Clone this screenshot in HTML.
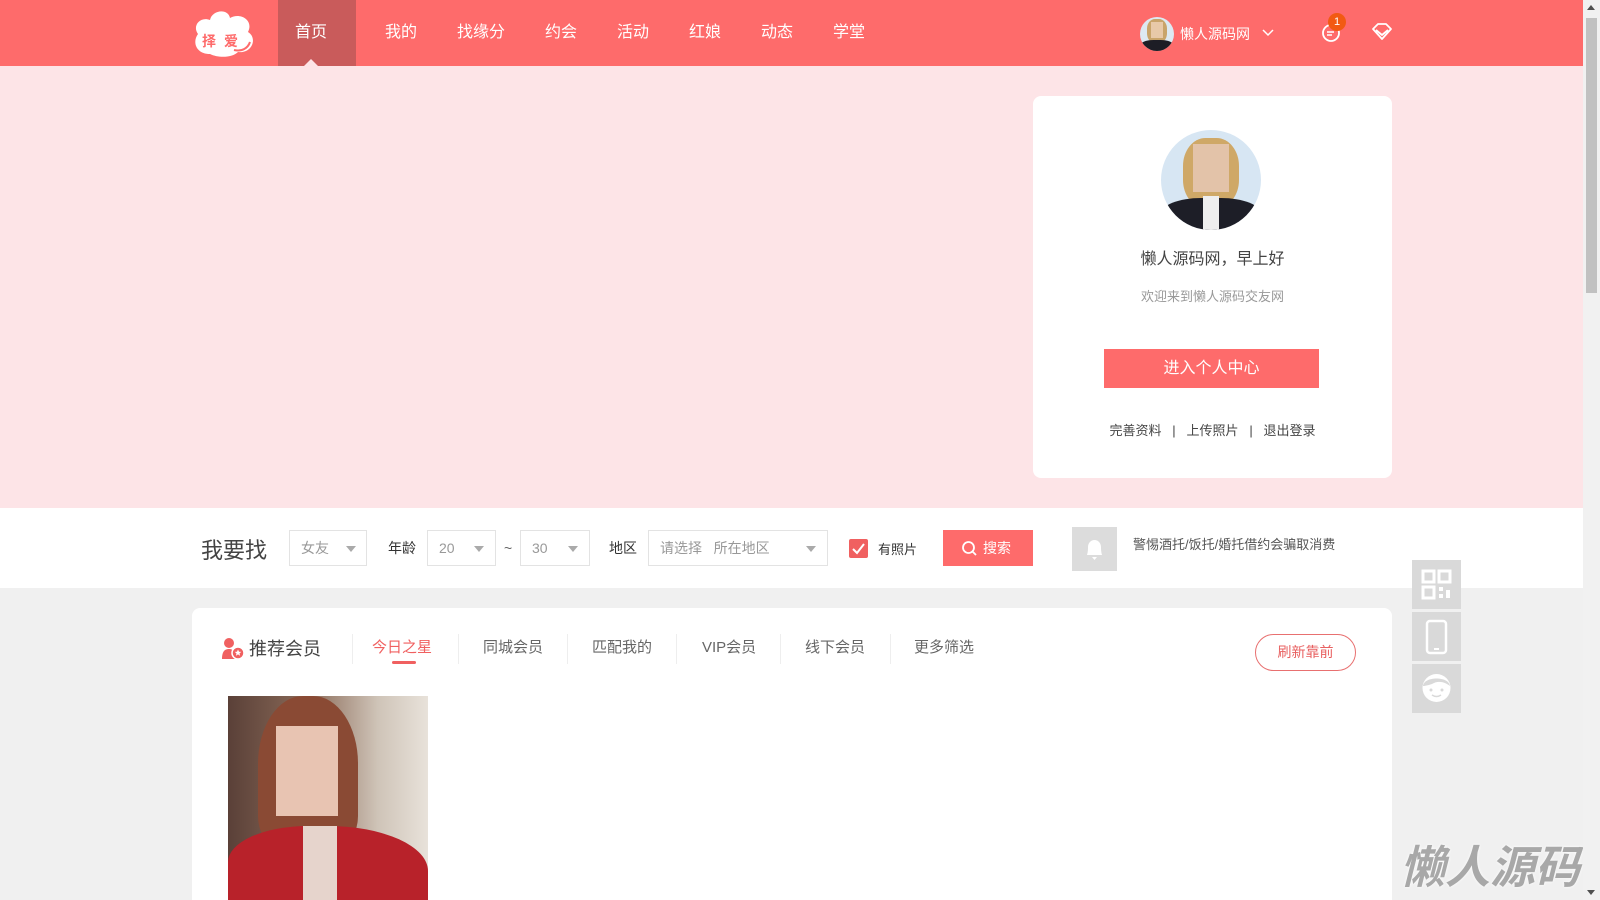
<!DOCTYPE html>
<html style="width:1600px;height:900px;overflow:hidden"><head><meta charset="utf-8">
<style>
*{margin:0;padding:0;box-sizing:border-box}
body{width:1600px;height:900px;overflow:hidden;background:#f0f0f0;font-family:"Liberation Sans","Noto Sans CJK SC",sans-serif;position:relative;color:#333}
.abs{position:absolute}
.nav{left:0;top:0;width:1583px;height:66px;background:#fe6b6b}
.nav .it{position:absolute;top:0;height:66px;line-height:66px;color:#fff;font-size:16px;transform:translateX(-50%)}
.banner{left:0;top:66px;width:1583px;height:442px;background:#fde4e7}
.card{left:1033px;top:96px;width:359px;height:382px;background:#fff;border-radius:8px}
.sbar{left:0;top:508px;width:1583px;height:80px;background:#fff}
.box{position:absolute;top:530px;height:36px;border:1px solid #e3e3e3;color:#999;font-size:14px;line-height:34px;padding-left:11px}
.tri{position:absolute;top:15px;width:0;height:0;border-left:5px solid transparent;border-right:5px solid transparent;border-top:6px solid #aaa}
.lbl{position:absolute;top:530px;line-height:36px;font-size:14px;color:#333}
.panel{left:192px;top:608px;width:1200px;height:292px;background:#fff;border-radius:8px 8px 0 0}
.tab{position:absolute;top:636px;font-size:15px;color:#666;line-height:24px}
.sep{position:absolute;top:634px;width:1px;height:30px;background:#eee}
.side{position:absolute;left:1412px;width:49px;height:49px;background:#d9d9d9}
</style></head><body>
<div class="abs nav">
  <svg class="abs" style="left:190px;top:8px" width="70" height="50" viewBox="0 0 70 50">
    <path d="M20 46 C6 46 2 34 8 26 C2 18 10 8 20 12 C22 2 38 0 40 10 C50 4 64 12 58 24 C68 30 62 46 48 44 C42 50 28 50 20 46Z" fill="#fff"/>
    <path d="M44 42 C52 44 58 40 60 34" stroke="#fe6b6b" stroke-width="2" fill="none"/>
    <text x="12" y="38" font-size="14" fill="#fe6b6b" font-weight="bold" font-family="Noto Sans CJK SC">择</text>
    <text x="34" y="38" font-size="14" fill="#fe6b6b" font-weight="bold" font-family="Noto Sans CJK SC">爱</text>
  </svg>
  <div class="abs" style="left:278px;top:0;width:78px;height:66px;background:#c95b5b"></div>
  <div class="abs" style="left:311px;top:59px;width:0;height:0;border-left:7px solid transparent;border-right:7px solid transparent;border-bottom:7px solid #fde4e7;transform:translateX(-50%)"></div>
  <div class="it" style="left:311px">首页</div>
  <div class="it" style="left:401px">我的</div>
  <div class="it" style="left:481px">找缘分</div>
  <div class="it" style="left:561px">约会</div>
  <div class="it" style="left:633px">活动</div>
  <div class="it" style="left:705px">红娘</div>
  <div class="it" style="left:777px">动态</div>
  <div class="it" style="left:849px">学堂</div>
  <div class="abs" style="left:1140px;top:17px;width:34px;height:34px;border-radius:50%;overflow:hidden;background:#dde9f2">
    <div class="abs" style="left:7px;top:2px;width:20px;height:24px;border-radius:40%;background:#c9a46a"></div>
    <div class="abs" style="left:11px;top:5px;width:12px;height:16px;background:#e8c9a8"></div>
    <div class="abs" style="left:0;top:23px;width:34px;height:14px;background:#1d1d25;border-radius:40% 40% 0 0"></div>
  </div>
  <div class="abs" style="left:1180px;top:24px;color:#fff;font-size:14px">懒人源码网</div>
  <svg class="abs" style="left:1262px;top:29px" width="12" height="8"><path d="M1 1 L6 6 L11 1" stroke="#fff" stroke-width="1.5" fill="none"/></svg>
  <svg class="abs" style="left:1321px;top:22px" width="22" height="22"><circle cx="10" cy="11" r="8" stroke="#fff" stroke-width="1.8" fill="none"/><path d="M6 10h7M6 13h5" stroke="#fff" stroke-width="1.5"/></svg>
  <div class="abs" style="left:1328px;top:13px;width:18px;height:18px;border-radius:50%;background:#f25a12;color:#fff;font-size:11px;text-align:center;line-height:18px">1</div>
  <svg class="abs" style="left:1371px;top:22px" width="22" height="20"><path d="M2 7 L7 2 H15 L20 7 L11 17Z M5 8 L11 13 L17 8" stroke="#fff" stroke-width="1.8" fill="none" stroke-linejoin="round"/></svg>
</div>
<div class="abs banner"></div>
<div class="abs card">
  <div class="abs" style="left:128px;top:34px;width:100px;height:100px;border-radius:50%;overflow:hidden;background:#d7e6f3">
    <div class="abs" style="left:22px;top:8px;width:56px;height:70px;border-radius:40%;background:#cfa867"></div>
    <div class="abs" style="left:32px;top:14px;width:36px;height:48px;background:#e3c3a9"></div>
    <div class="abs" style="left:0;top:68px;width:100px;height:40px;background:#1d1e27;border-radius:40% 40% 0 0"></div>
    <div class="abs" style="left:42px;top:66px;width:16px;height:36px;background:#eee"></div>
  </div>
  <div class="abs" style="left:0;width:359px;top:149px;text-align:center;font-size:16px;color:#444">懒人源码网，早上好</div>
  <div class="abs" style="left:0;width:359px;top:190px;text-align:center;font-size:13px;color:#999">欢迎来到懒人源码交友网</div>
  <div class="abs" style="left:71px;top:253px;width:215px;height:39px;background:#fe6b6b;color:#fff;font-size:16px;text-align:center;line-height:39px">进入个人中心</div>
  <div class="abs" style="left:0;width:359px;top:324px;text-align:center;font-size:13px;color:#444">完善资料 &nbsp;&nbsp;|&nbsp;&nbsp; 上传照片 &nbsp;&nbsp;|&nbsp;&nbsp; 退出登录</div>
</div>
<div class="abs sbar"></div>
<div class="abs" style="left:201px;top:533px;font-size:22px;color:#444">我要找</div>
<div class="box" style="left:289px;width:78px">女友<span class="tri" style="left:56px"></span></div>
<div class="lbl" style="left:388px">年龄</div>
<div class="box" style="left:427px;width:69px">20<span class="tri" style="left:46px"></span></div>
<div class="lbl" style="left:504px;color:#666">~</div>
<div class="box" style="left:520px;width:70px">30<span class="tri" style="left:47px"></span></div>
<div class="lbl" style="left:609px">地区</div>
<div class="box" style="left:648px;width:180px">请选择 &nbsp;&nbsp;所在地区<span class="tri" style="left:157px"></span></div>
<div class="abs" style="left:849px;top:539px;width:19px;height:19px;background:#f06060;border-radius:2px"><svg width="19" height="19"><path d="M4 10 L8 14 L15 5" stroke="#fff" stroke-width="2" fill="none"/></svg></div>
<div class="lbl" style="left:878px;top:532px;font-size:13px">有照片</div>
<div class="abs" style="left:943px;top:530px;width:90px;height:36px;background:#fe6b6b;color:#fff;font-size:14px;line-height:36px;padding-left:40px">搜索
  <svg class="abs" style="left:18px;top:10px" width="18" height="18"><circle cx="7.5" cy="7.5" r="5.5" stroke="#fff" stroke-width="1.8" fill="none"/><path d="M11.5 11.5 L15 15" stroke="#fff" stroke-width="1.8"/></svg></div>
<div class="abs" style="left:1072px;top:527px;width:45px;height:44px;background:#dcdcdc">
  <svg width="45" height="44"><path d="M15 28 C16 25 16 22 16 20 C16 16 19 13 22.5 13 C26 13 29 16 29 20 C29 22 29 25 30 28Z" fill="#fff"/><path d="M20 30 h5 l-2.5 3z" fill="#fff"/></svg></div>
<div class="abs" style="left:1133px;top:534px;font-size:13px;color:#555">警惕酒托/饭托/婚托借约会骗取消费</div>
<div class="abs panel"></div>
<svg class="abs" style="left:221px;top:637px" width="24" height="24"><circle cx="8" cy="6" r="5" fill="#f06060"/><path d="M1 22 C1 14 4 12 8 12 C12 12 14 14 14 22Z" fill="#f06060"/><circle cx="17" cy="16" r="6" fill="#f06060" stroke="#fff" stroke-width="1.5"/><path d="M17 12.5 l1 2.2 2.3.2-1.8 1.5.6 2.3-2.1-1.3-2.1 1.3.6-2.3-1.8-1.5 2.3-.2z" fill="#fff"/></svg>
<div class="abs" style="left:249px;top:635px;font-size:18px;color:#444">推荐会员</div>
<div class="sep" style="left:352px"></div>
<div class="tab" style="left:372px;color:#f06060">今日之星</div>
<div class="abs" style="left:392px;top:661px;width:24px;height:3px;background:#f06060;border-radius:2px"></div>
<div class="sep" style="left:458px"></div>
<div class="tab" style="left:483px">同城会员</div>
<div class="sep" style="left:567px"></div>
<div class="tab" style="left:592px">匹配我的</div>
<div class="sep" style="left:676px"></div>
<div class="tab" style="left:702px">VIP会员</div>
<div class="sep" style="left:780px"></div>
<div class="tab" style="left:805px">线下会员</div>
<div class="sep" style="left:890px"></div>
<div class="tab" style="left:914px">更多筛选</div>
<div class="abs" style="left:1255px;top:634px;width:101px;height:37px;border:1px solid #e87070;border-radius:19px;color:#e86060;font-size:14px;text-align:center;line-height:35px">刷新靠前</div>
<div class="abs" style="left:228px;top:696px;width:200px;height:204px;overflow:hidden;background:linear-gradient(90deg,#5a4038 0,#8a6a58 40%,#cfc4b8 75%,#e8e2da 100%)">
  <div class="abs" style="left:30px;top:0;width:100px;height:150px;background:#8a4a34;border-radius:45% 45% 20% 20%"></div>
  <div class="abs" style="left:48px;top:30px;width:62px;height:90px;background:#e8c4b2"></div>
  <div class="abs" style="left:0;top:130px;width:200px;height:90px;background:#b8222a;border-radius:40% 50% 0 0"></div>
  <div class="abs" style="left:75px;top:130px;width:34px;height:80px;background:#e6d4cc"></div>
</div>
<div class="side" style="top:560px"><svg width="49" height="49"><g fill="none" stroke="#fff" stroke-width="3"><rect x="11" y="11" width="11" height="11"/><rect x="27" y="11" width="11" height="11"/><rect x="11" y="27" width="11" height="11"/></g><path d="M27 27h4v4h-4zM34 30h4v8h-4zM27 34h4v4h-4z" fill="#fff"/></svg></div>
<div class="side" style="top:612px"><svg width="49" height="49"><rect x="15" y="9" width="19" height="32" rx="3" fill="none" stroke="#fff" stroke-width="2.5"/><path d="M22 37h5" stroke="#fff" stroke-width="2"/></svg></div>
<div class="side" style="top:664px"><svg width="49" height="49"><circle cx="24.5" cy="24" r="14" fill="#fff"/><path d="M11 22 C12 12 37 12 38 22 C33 18 26 16 20 20 C17 21 13 22 11 22Z" fill="#d9d9d9"/><circle cx="19" cy="26" r="1.5" fill="#d9d9d9"/><circle cx="30" cy="26" r="1.5" fill="#d9d9d9"/><path d="M20 31 Q24.5 34 29 31" stroke="#d9d9d9" stroke-width="1.5" fill="none"/></svg></div>
<div class="abs" style="left:1400px;top:836px;white-space:nowrap;font-size:45px;font-weight:bold;font-style:italic;color:#a8a8a8;text-shadow:0 0 3px #fff;font-family:'Noto Sans CJK SC',sans-serif;line-height:56px">懒人源码</div>
<div class="abs" style="left:1583px;top:0;width:17px;height:900px;background:#f1f1f1"></div>
<div class="abs" style="left:1586px;top:18px;width:11px;height:275px;background:#c1c1c1"></div>
<div class="abs" style="left:1587px;top:5px;width:0;height:0;border-left:4px solid transparent;border-right:4px solid transparent;border-bottom:5px solid #505050"></div>
<div class="abs" style="left:1587px;top:890px;width:0;height:0;border-left:4px solid transparent;border-right:4px solid transparent;border-top:5px solid #505050"></div>
</body></html>
